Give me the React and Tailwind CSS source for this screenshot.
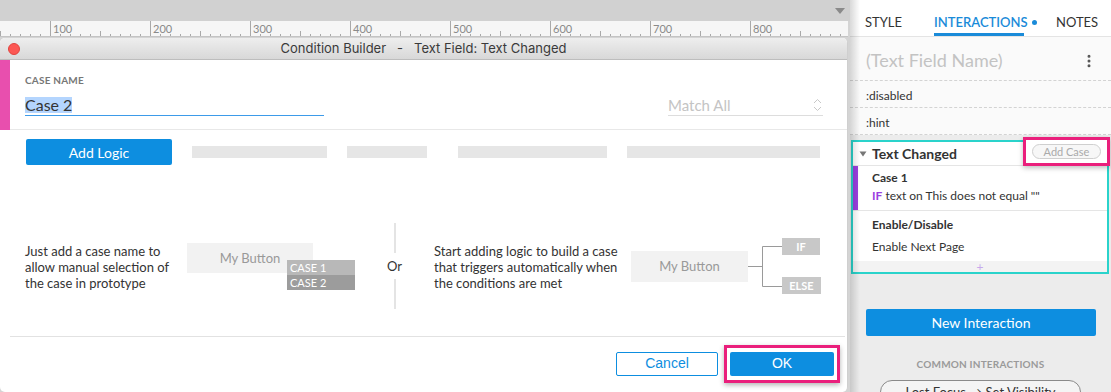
import React from 'react';
import { EllipsisVertical } from 'lucide-react';

const BLUE = 'bg-[#0d8ee0]';

const Ruler = () => {
  const ticks = [];
  for (let v = 50; v <= 890; v += 10) {
    const x = v - 50 + 0.5;
    const h = v % 100 === 0 ? 16 : v % 50 === 0 ? 6 : 3;
    ticks.push(<line key={v} x1={x} x2={x} y1={16 - h} y2={16} stroke="#a9a9a9" strokeWidth="1" />);
  }
  const labels = [100, 200, 300, 400, 500, 600, 700, 800];
  return (
    <div className="h-[16px] shrink-0 w-[848px] bg-[#f6f6f6] border-b border-[#c4c4c4] overflow-hidden">
      <svg width="848" height="16" className="block">
        {ticks}
        {labels.map((l) => (
          <text key={l} x={l - 50 + 3} y="12" fontSize="11" fill="#8a8a8a" fontFamily="Lato, sans-serif">
            {l}
          </text>
        ))}
      </svg>
    </div>
  );
};

const CaseNameSection = () => (
  <div className="flex h-[70px]">
    <div className="w-[10px] bg-[#e84fae]" />
    <div className="flex-1 border-b border-[#e8e8e8] pl-[15px] pr-[24px] pt-[14px]">
      <div className="text-[10px] leading-[12px] font-bold text-[#777] tracking-[0.2px]">CASE NAME</div>
      <div className="flex justify-between items-end mt-[11px]">
        <div className="w-[299px] border-b border-[#3d9be9] pb-[2px] flex">
          <span className="block text-[16px] leading-[16px] text-[#333] bg-[#b4d5fe]">Case 2</span>
        </div>
        <div className="w-[155px] border-b border-[#dddddd] pb-[2px] flex justify-between items-center">
          <span className="block text-[15px] leading-[16px] text-[#c4c4c4]">Match All</span>
          <svg width="9" height="14" viewBox="0 0 9 14" className="mr-[1px] block">
            <path d="M1 5 L4.5 1.5 L8 5" fill="none" stroke="#c8c8c8" strokeWidth="1" />
            <path d="M1 9 L4.5 12.5 L8 9" fill="none" stroke="#c8c8c8" strokeWidth="1" />
          </svg>
        </div>
      </div>
    </div>
  </div>
);

const LogicRow = () => (
  <div className="flex items-center pt-[9px] pl-[26px]">
    <button className={`w-[146px] h-[26px] ${BLUE} text-white text-[14px] rounded-[2px]`}>Add Logic</button>
    <div className="ml-[20px] w-[135px] h-[12px] bg-[#e6e6e6]" />
    <div className="ml-[20px] w-[80px] h-[12px] bg-[#e6e6e6]" />
    <div className="ml-[31px] w-[149px] h-[12px] bg-[#e6e6e6]" />
    <div className="ml-[20px] w-[193px] h-[12px] bg-[#e6e6e6]" />
  </div>
);

const Explainer = () => (
  <div className="flex items-center mt-[58px] h-[86px] pl-[25px] text-[13px] leading-[16px] text-[#333]">
    <div className="w-[162px] pt-[1px]">
      Just add a case name to
      <br />
      allow manual selection of
      <br />
      the case in prototype
    </div>
    <div className="relative w-[168px] h-[47px]">
      <div className="w-[126px] h-[30px] bg-[#f2f2f2] text-[#999] flex items-center justify-center">My Button</div>
      <div className="absolute left-[100px] top-[17px] w-[68px]">
        <div className="h-[15px] bg-[#b8b8b8] text-white text-[11px] leading-[15px] pl-[3px]">CASE 1</div>
        <div className="h-[15px] bg-[#9c9c9c] text-white text-[11px] leading-[15px] pl-[3px]">CASE 2</div>
      </div>
    </div>
    <div className="w-[79px] h-full flex flex-col items-center">
      <div className="w-[2px] h-[30px] bg-[#e4e4e4]" />
      <div className="py-[5px] text-[13px] leading-[16px]">Or</div>
      <div className="w-[2px] flex-1 bg-[#e4e4e4]" />
    </div>
    <div className="w-[197px] pt-[1px]">
      Start adding logic to build a case
      <br />
      that triggers automatically when
      <br />
      the conditions are met
    </div>
    <div className="w-[117px] h-[31px] bg-[#f2f2f2] text-[#999] flex items-center justify-center">My Button</div>
    <div className="relative w-[73px] h-[56px]">
      <svg width="34" height="56" className="absolute left-0 top-0">
        <path d="M0 28.5 H14.5 M14.5 8.5 V48.5 M14.5 8.5 H34 M14.5 48.5 H34" fill="none" stroke="#9a9a9a" strokeWidth="1" />
      </svg>
      <div className="absolute left-[34px] top-0 w-[38px] h-[17px] bg-[#c8c8c8] text-white text-[11px] font-bold flex items-center justify-center">IF</div>
      <div className="absolute left-[34px] bottom-0 w-[39px] h-[17px] bg-[#c8c8c8] text-white text-[11px] font-bold flex items-center justify-center">ELSE</div>
    </div>
  </div>
);

const Footer = () => (
  <div className="mt-[27px] ml-[10px] mr-[2px] border-t border-[#e2e2e2] h-[54px] flex items-center justify-end pr-[5px]">
    <button className="w-[102px] h-[24px] border border-[#0d8ee0] text-[#0d8ee0] bg-white rounded-[2px] text-[14px] font-['Liberation_Sans_Narrow','Liberation_Sans',sans-serif]">
      Cancel
    </button>
    <div className="ml-[6px] border-[3px] border-[#ea1f7c] px-[3px] py-[4px] bg-white shadow-[0_2px_5px_rgba(0,0,0,0.3)]">
      <button className={`w-[104px] h-[24px] ${BLUE} text-white rounded-[2px] text-[14px] font-['Liberation_Sans_Narrow','Liberation_Sans',sans-serif] block`}>
        OK
      </button>
    </div>
  </div>
);

const Dialog = () => (
  <div className="w-[848px] flex-1 mt-[1px] bg-white rounded-t-[5px] rounded-b-[5px] border-r border-[#cfcfcf] overflow-hidden">
    <div className="h-[22px] bg-gradient-to-b from-[#eeeeee] to-[#d8d8d8] border-b border-[#bdbdbd] flex items-center relative">
      <div className="absolute left-[8px] top-[5px] w-[12px] h-[12px] rounded-full bg-[#fc5753] border border-[#e0443e]" />
      <div className="flex-1 text-center text-[13px] text-[#3a3a3a] whitespace-pre font-['Inter',sans-serif]">
        {'Condition Builder   -   Text Field: Text Changed'}
      </div>
    </div>
    <CaseNameSection />
    <LogicRow />
    <Explainer />
    <Footer />
  </div>
);

const Tabs = () => (
  <div className="h-[37px] bg-white flex items-start pt-[14px] pl-[15px] text-[13px] leading-[16px] text-[#333] border-b border-[#e4e4e4]">
    <div className="w-[69px]">STYLE</div>
    <div className="w-[122px]">
      <div className="flex items-center text-[#1a8bd9] font-semibold">
        INTERACTIONS
        <span className="ml-[4px] w-[5px] h-[5px] rounded-full bg-[#1a8bd9] inline-block" />
      </div>
      <div className="mt-[3px] h-[3px] w-[90px] bg-[#1a8bd9]" />
    </div>
    <div>NOTES</div>
  </div>
);

const Panel = () => (
  <div className="relative w-[261px] h-full overflow-hidden bg-[#ececec] font-['Lato',sans-serif]">
    <Tabs />
    <div className="bg-[#fafafa]">
      <div className="h-[44px] flex items-center justify-between pl-[16px] pr-[14px] pt-[4px] border-b border-dashed border-[#d3d3d3]">
        <span className="text-[18px] text-[#c3c3c3]">(Text Field Name)</span>
        <EllipsisVertical size={16} className="text-[#555]" strokeWidth={2.5} />
      </div>
      <div className="h-[27px] flex items-center pl-[16px] pt-[3px] text-[12px] text-[#333] border-b border-dashed border-[#d3d3d3]">:disabled</div>
      <div className="h-[27px] flex items-center pl-[16px] pt-[3px] text-[12px] text-[#333] border-b border-dashed border-[#d3d3d3]">:hint</div>
    </div>
    <div className="mt-[5px] ml-[1px] mr-[2px] border-2 border-[#2ad3cb] bg-white">
      <div className="relative h-[24px] flex items-center pl-[6px] border-b border-[#e5e5e5]">
        <svg width="8" height="6" viewBox="0 0 8 6" className="mr-[5px]">
          <path d="M0.5 0.5 H7.5 L4 5.5 Z" fill="#777" />
        </svg>
        <span className="text-[14px] font-bold text-[#333]">Text Changed</span>
        <div className="absolute right-[-3px] top-[-5px] w-[87px] h-[29px] border-[3px] border-[#ea1f7c] bg-white shadow-[0_2px_5px_rgba(0,0,0,0.25)] flex items-center justify-center">
          <div className="w-[69px] h-[15px] rounded-full border border-[#cfcfcf] bg-[#f7f7f7] text-[11px] leading-[13px] text-[#aaa] text-center">Add Case</div>
        </div>
      </div>
      <div className="flex h-[45px] border-b border-[#e5e5e5]">
        <div className="w-[5px] bg-[#9a3fe0]" />
        <div className="pl-[14px] pt-[4px] text-[12px] text-[#333]">
          <div className="font-bold leading-[16px]">Case 1</div>
          <div className="mt-[2px] leading-[16px]">
            <span className="text-[#9a3fe0] font-bold">IF</span> text on This does not equal ""
          </div>
        </div>
      </div>
      <div className="h-[50px] pl-[19px] pt-[6px] text-[12px] text-[#333]">
        <div className="font-bold leading-[16px]">Enable/Disable</div>
        <div className="mt-[6px] leading-[16px]">Enable Next Page</div>
      </div>
      <div className="h-[11px] bg-[#f3f3f3] flex items-center justify-center text-[12px] leading-[10px] text-[#c8a8ec]">+</div>
    </div>
    <div className="mt-[35px] mx-[16px] h-[27px] w-[230px] bg-[#0d8ee0] rounded-[2px] text-white text-[14px] flex items-center justify-center">
      New Interaction
    </div>
    <div className="mt-[22px] text-center text-[10px] leading-[12px] font-bold text-[#9a9a9a] tracking-[0.2px]">COMMON INTERACTIONS</div>
    <div className="mt-[10px] mx-auto w-[201px] h-[24px] rounded-full border border-[#8a8a8a] bg-[#f4f4f4] text-[13px] text-[#333] text-center leading-[22px]">
      Lost Focus → Set Visibility
    </div>
    <div className="absolute left-0 top-0 h-full w-[10px] bg-gradient-to-r from-black/15 to-transparent pointer-events-none" />
  </div>
);

export default function App() {
  return (
    <div className="w-[1111px] h-[392px] flex overflow-hidden bg-[#d6d6d6] font-['Lato',sans-serif]">
      <div className="w-[850px] h-full flex flex-col bg-[#d4d4d4]">
        <div className="h-[21px] shrink-0 bg-[#d1d1d1] flex justify-end items-center pr-[5px]">
          <svg width="10" height="6" viewBox="0 0 10 6">
            <path d="M0 0 H10 L5 6 Z" fill="#8a8a8a" />
          </svg>
        </div>
        <Ruler />
        <Dialog />
      </div>
      <Panel />
    </div>
  );
}
